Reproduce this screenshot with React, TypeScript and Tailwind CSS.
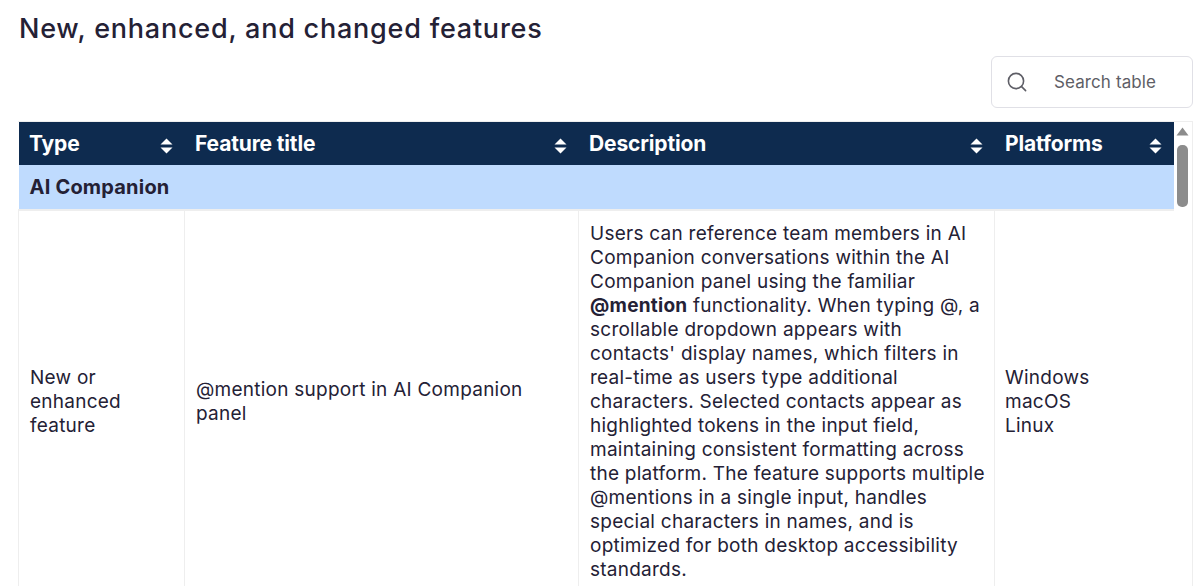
const font = { fontFamily: 'Inter, "Liberation Sans", sans-serif' }

function SortIcon() {
  return (
    <svg width="13" height="16" viewBox="0 0 13 16" className="shrink-0 mt-[5px]" fill="#fff">
      <path d="M6.5 0.5 L12.5 6.5 H0.5 Z" />
      <path d="M0.5 9.5 H12.5 L6.5 15.5 Z" />
    </svg>
  )
}

function HeaderCell({ title }: { title: string }) {
  return (
    <th className="p-0 h-[43px] font-normal text-left">
      <div className="flex items-center justify-between pl-[10.5px] pr-[12px]">
        <span className="text-[21px] font-bold tracking-[-0.15px] text-white">{title}</span>
        <SortIcon />
      </div>
    </th>
  )
}

export default function App() {
  return (
    <div style={font} className="h-[586px] overflow-hidden bg-white text-[#242135]">
      <h2 className="pl-[19px] pt-[12px] text-[27px] leading-[34px] font-medium tracking-[0.77px]">
        New, enhanced, and changed features
      </h2>
      <div className="flex justify-end pr-[11px] mt-[10px]">
        <div className="flex items-center w-[202px] h-[52px] rounded-[6px] border border-[#e0e0e6] pl-[15px]">
          <svg width="20" height="20" viewBox="0 0 20 20" fill="none" stroke="#5e5e66" strokeWidth="1.6" strokeLinecap="round">
            <circle cx="9" cy="9" r="7.6" />
            <path d="M14.6 14.6 L18.6 18.6" />
          </svg>
          <span className="ml-[27px] pt-[2px] text-[17px] text-[#5e5e66] tracking-[0.1px]">Search table</span>
        </div>
      </div>
      <div className="flex ml-[18px] mr-[11px] mt-[13px] border-t border-r border-[#eeeeee]">
        <table className="w-[1155px] table-fixed border-collapse shrink-0">
          <colgroup>
            <col className="w-[166px]" />
            <col className="w-[394px]" />
            <col className="w-[416px]" />
            <col className="w-[179px]" />
          </colgroup>
          <thead>
            <tr className="bg-[#0e2b4f]">
              <HeaderCell title="Type" />
              <HeaderCell title="Feature title" />
              <HeaderCell title="Description" />
              <HeaderCell title="Platforms" />
            </tr>
          </thead>
          <tbody className="text-[19px] leading-[24px] tracking-[0.25px]">
            <tr className="bg-[#bfdbfe]">
              <td colSpan={4} className="h-[45px] pl-[11px] text-[20px] font-bold tracking-[0.2px]">
                AI Companion
              </td>
            </tr>
            <tr>
              <td className="border-t-2 border-r border-l border-[#eeeeee] pl-[11px] pr-[8px] align-middle">
                New or enhanced feature
              </td>
              <td className="border-t-2 border-r border-[#eeeeee] pl-[11px] pr-[11px] align-middle">
                @mention support in AI Companion panel
              </td>
              <td className="border-t-2 border-r border-[#eeeeee] pl-[11px] pr-[4px] pt-[11px] pb-[11px] align-middle">
                Users can reference team members in AI Companion conversations within the AI Companion panel using the familiar{' '}
                <strong>@mention</strong> functionality. When typing @, a scrollable dropdown appears with
                <br />
                contacts' display names, which filters in real-time as users type additional characters. Selected contacts appear as highlighted tokens in the input field, maintaining consistent formatting across the platform. The feature supports multiple @mentions in a single input, handles special characters in names, and is optimized for both desktop accessibility standards.
              </td>
              <td className="border-t-2 border-[#eeeeee] pl-[10px] pr-[8px] align-middle">
                Windows
                <br />
                macOS
                <br />
                Linux
              </td>
            </tr>
          </tbody>
        </table>
        <div className="flex-1 flex flex-col items-center bg-white pt-[5px] pr-[1px]">
          <svg width="13" height="9" viewBox="0 0 13 9" fill="#8c8c8c">
            <path d="M6.5 0.5 L12.5 8.5 H0.5 Z" />
          </svg>
          <div className="w-[11px] h-[62px] mt-[9px] rounded-[5px] bg-[#8c8c8c]" />
        </div>
      </div>
    </div>
  )
}
